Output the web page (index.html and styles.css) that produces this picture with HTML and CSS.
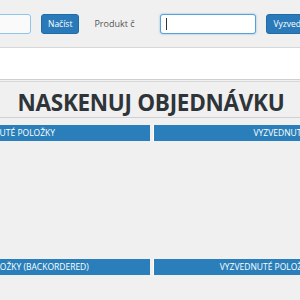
FILE: index.html
```html
<!DOCTYPE html>
<html lang="cs">
<head>
<meta charset="utf-8">
<link rel="stylesheet" href="styles.css">
</head>
<body>
<div class="page">
  <div class="toolbar">
    <input class="field field-order" type="text">
    <button class="btn">Načíst</button>
    <span class="label">Produkt č</span>
    <span class="field-wrap">
      <input class="field field-product" type="text">
      <span class="caret"></span>
    </span>
    <button class="btn">Vyzvednout</button>
  </div>
  <div class="band"></div>
  <h1 class="title">NASKENUJ OBJEDNÁVKU</h1>
  <div class="grid">
    <div class="col">
      <div class="bar">NEVYZVEDNUTÉ POLOŽKY</div>
      <div class="body"></div>
    </div>
    <div class="col">
      <div class="bar">VYZVEDNUTÉ POLOŽKY</div>
      <div class="body"></div>
    </div>
    <div class="col">
      <div class="bar">NEVYZVEDNUTÉ POLOŽKY (BACKORDERED)</div>
      <div class="body"></div>
    </div>
    <div class="col">
      <div class="bar">VYZVEDNUTÉ POLOŽKY (BACKORDERED)</div>
      <div class="body"></div>
    </div>
  </div>
</div>
</body>
</html>
```
FILE: styles.css
```css
html, body {
  margin: 0;
  padding: 0;
  background: #f0f0f0;
  overflow: hidden;
  font-family: "Open Sans", "Noto Sans", sans-serif;
}
.page {
  width: 590px;
  margin-left: -144px;
}
.toolbar {
  display: flex;
  align-items: center;
  height: 47px;
  padding-left: 75px;
  border-bottom: 1px solid #d8d8d8;
  box-sizing: content-box;
}
.field {
  box-sizing: border-box;
  height: 20px;
  border: 1px solid #8cc4ec;
  border-radius: 3px;
  background: #fafafa;
  margin: 0;
  padding: 0 5px;
  font: 10px "Open Sans", sans-serif;
  outline: none;
  display: block;
}
.field-order { width: 100px; }
.field-wrap {
  position: relative;
  display: block;
}
.field-product {
  width: 96px;
  border-color: #5b9dd9;
  background: #fff;
  box-shadow: 0 0 2px rgba(30,140,190,.6);
}
.caret {
  position: absolute;
  left: 6px;
  top: 4px;
  width: 1px;
  height: 12px;
  background: #333;
}
.btn {
  height: 20px;
  margin-left: 10px;
  padding: 0 6px;
  border: 1px solid #1f6da8;
  border-radius: 3px;
  background: #2a7ab9;
  color: #fff;
  font: 8.5px "Open Sans", sans-serif;
}
.label {
  font-size: 9px;
  color: #555;
  margin-left: 15px;
  width: 66px;
}
.band {
  height: 31px;
  background: #fff;
  border-bottom: 1px solid #cfcfcf;
}
.title {
  margin: 1px 0 0;
  border-top: 1px solid #d8d8d8;
  border-bottom: 1px solid #d0d0d0;
  height: 35px;
  line-height: 41px;
  text-align: center;
  font-size: 22.5px;
  font-weight: 700;
  color: #2f3439;
  letter-spacing: -0.3px;
}
.grid {
  margin-top: 7px;
  display: grid;
  grid-template-columns: 1fr 1fr;
  column-gap: 3px;
  row-gap: 1px;
}
.bar {
  height: 16px;
  line-height: 16px;
  background: #2a7fba;
  color: #fff;
  font-size: 8.5px;
  text-align: center;
  border-left: 1px solid #fff;
}
.body {
  height: 117px;
}
```
